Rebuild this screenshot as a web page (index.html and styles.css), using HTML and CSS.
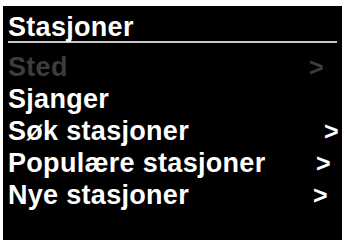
FILE: index.html
```html
<!DOCTYPE html>
<html>
<head>
<meta charset="utf-8">
<link rel="stylesheet" href="styles.css">
</head>
<body>
<div class="screen">
  <div class="title">Stasjoner</div>
  <ul class="menu">
    <li class="item dim arrow-a"><span>Sted</span><span class="chev">&gt;</span></li>
    <li class="item"><span>Sjanger</span></li>
    <li class="item arrow-b"><span>Søk stasjoner</span><span class="chev">&gt;</span></li>
    <li class="item arrow-c"><span>Populære stasjoner</span><span class="chev">&gt;</span></li>
    <li class="item arrow-d"><span>Nye stasjoner</span><span class="chev">&gt;</span></li>
  </ul>
</div>
</body>
</html>
```

FILE: styles.css
```css
html, body {
  margin: 0;
  padding: 0;
  background: #fff;
  width: 345px;
  height: 240px;
  overflow: hidden;
}
.screen {
  margin: 6px 3px 0 3px;
  height: 234px;
  background: #000;
  color: #fff;
  font-family: "Liberation Sans", Arial, sans-serif;
  font-weight: bold;
  font-size: 27px;
  letter-spacing: 0.3px;
  display: flex;
  flex-direction: column;
}
.title {
  margin: 0 5px;
  padding-top: 7px;
  line-height: 28px;
  border-bottom: 2px solid #c8c8c8;
}
.menu {
  list-style: none;
  margin: 8px 0 0 0;
  padding: 0 0 0 5px;
}
.item {
  display: flex;
  justify-content: space-between;
  line-height: 32px;
  height: 32px;
}
.dim { color: #3c3c3c; }
.chev { font-size: 25px; }
.arrow-a { padding-right: 18px; }
.arrow-b { padding-right: 3px; }
.arrow-c { padding-right: 11px; }
.arrow-d { padding-right: 14px; }
```
